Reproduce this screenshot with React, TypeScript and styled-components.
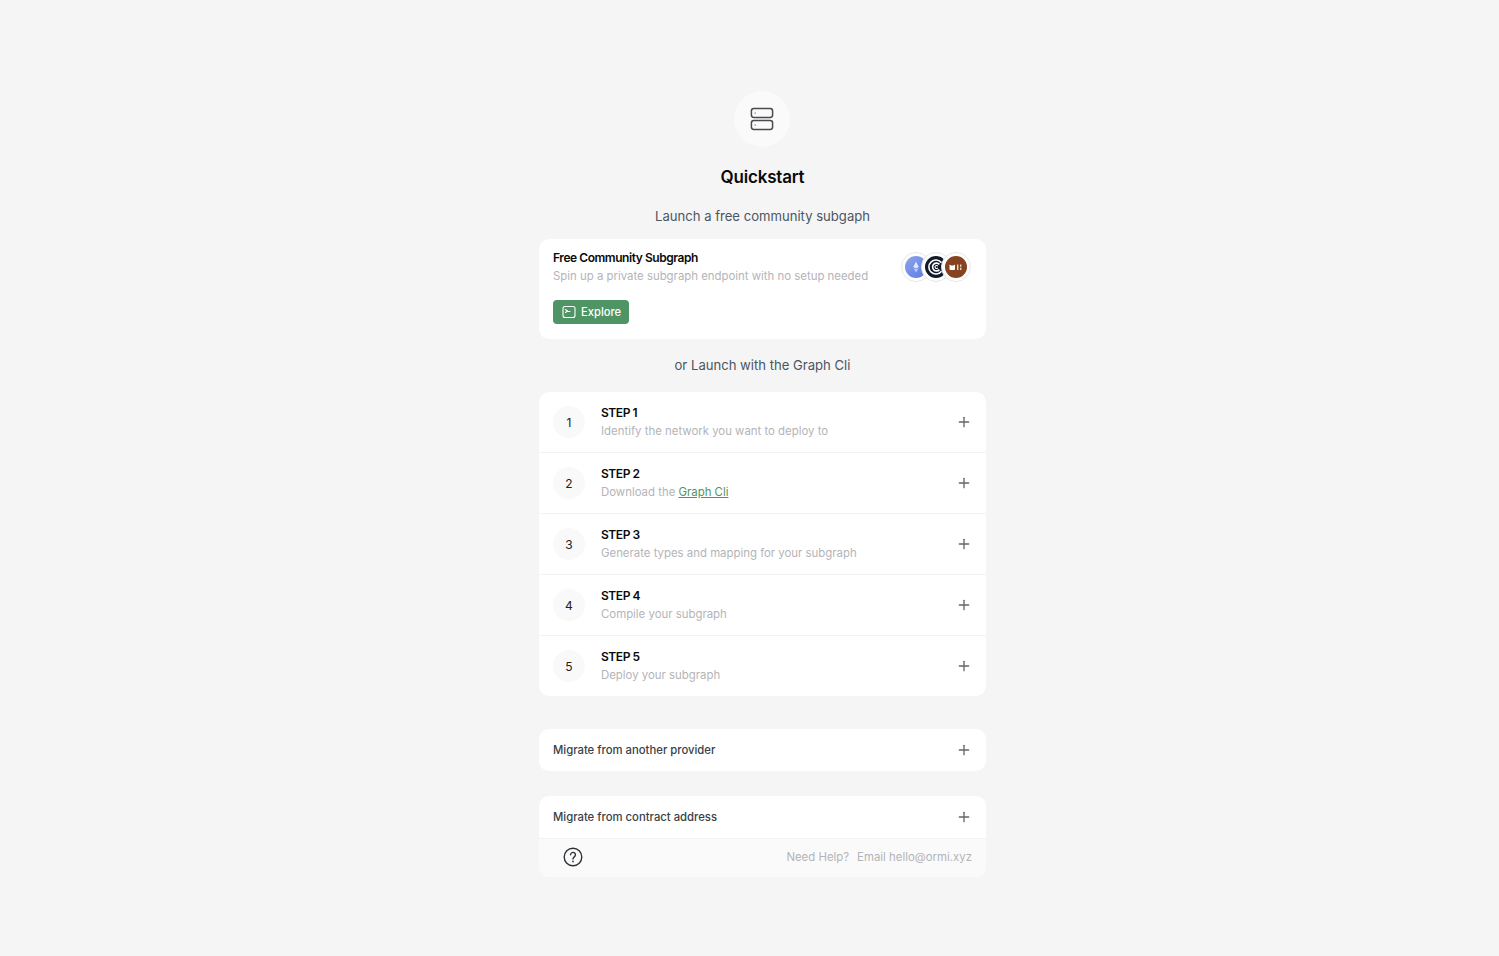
import React from "react";
import styled, { createGlobalStyle } from "styled-components";
import { Plus } from "lucide-react";

const GlobalStyle = createGlobalStyle`
  html, body {
    margin: 0;
    padding: 0;
    background: #f5f5f5;
    font-family: "Inter", "Liberation Sans", sans-serif;
  }
  * {
    box-sizing: border-box;
  }
`;

const steps = [
  { n: 1, text: "Identify the network you want to deploy to" },
  { n: 2, text: "Download the ", link: "Graph Cli" },
  { n: 3, text: "Generate types and mapping for your subgraph" },
  { n: 4, text: "Compile your subgraph" },
  { n: 5, text: "Deploy your subgraph" },
];

const ServerIcon = () => (
  <svg width="24" height="24" viewBox="0 0 24 24" fill="none" stroke="#4a4a4f" strokeWidth="1.5">
    <rect x="1.4" y="1.5" width="21.2" height="9" rx="2.4" />
    <rect x="1.4" y="13.5" width="21.2" height="9" rx="2.4" />
    <path d="M4.5 6h1.5M4.5 18h1.5" stroke="#77777c" strokeWidth="1.2" />
  </svg>
);

const TerminalIcon = () => (
  <svg width="14" height="14" viewBox="0 0 14 14" fill="none" stroke="#fff" strokeWidth="1.1">
    <rect x="1" y="1.5" width="12" height="11" rx="2" />
    <path d="M3.5 4.5 5.5 6 3.5 7.5M6 6.5h2" strokeLinecap="round" strokeLinejoin="round" />
  </svg>
);

const EthIcon = () => (
  <svg width="22" height="22" viewBox="0 0 22 22">
    <defs>
      <linearGradient id="ethFill" x1="0" y1="0" x2="1" y2="1">
        <stop offset="0" stopColor="#8fa4ec" />
        <stop offset="1" stopColor="#5b7be0" />
      </linearGradient>
    </defs>
    <circle cx="11" cy="11" r="11" fill="url(#ethFill)" />
    <path d="M11 5.5 8.2 11 11 12.6 13.8 11Z" fill="#dfe6fb" />
    <path d="M8.4 11.9 11 16.5 13.6 11.9 11 13.4Z" fill="#c3cff5" />
  </svg>
);

const CoinIcon = () => (
  <svg width="22" height="22" viewBox="0 0 22 22" fill="none">
    <circle cx="11" cy="11" r="11" fill="#101a2b" />
    <path d="M16.5 6.8A7 7 0 1 0 16.5 15.2" stroke="#fff" strokeWidth="1.6" />
    <path d="M14.4 8.4A3.9 3.9 0 1 0 14.4 13.6" stroke="#fff" strokeWidth="1.6" />
    <path d="M12.8 10.2A1.5 1.5 0 1 0 12.8 11.8" stroke="#fff" strokeWidth="1.1" />
  </svg>
);

const BrownIcon = () => (
  <svg width="22" height="22" viewBox="0 0 22 22">
    <circle cx="11" cy="11" r="11" fill="#86431f" />
    <path d="M4.5 8.5 6 9.4h2.5L10 8.5V13a1 1 0 0 1-1 1H5.5a1 1 0 0 1-1-1Z" fill="#fff" />
    <path d="M12 8.5h1.4v5.5H12ZM15 8.5h1.4v2.2H15ZM15 11.7h1.4V14H15Z" fill="#e9d5c7" />
  </svg>
);

const HelpIcon = () => (
  <svg width="20" height="20" viewBox="0 0 20 20" fill="none" stroke="#2f3239" strokeWidth="1.4">
    <circle cx="10" cy="10" r="8.8" />
    <path d="M7.6 7.8a2.4 2.4 0 1 1 3.7 2c-.8.5-1.3 1-1.3 1.9v.4" strokeLinecap="round" />
    <path d="M10 14.4v.3" strokeLinecap="round" strokeWidth="1.6" />
  </svg>
);

const Page = styled.main`
  min-height: 956px;
  padding: 91px 0 79px 539px;
`;

const Column = styled.div`
  width: 447px;
  display: flex;
  flex-direction: column;
  align-items: stretch;
`;

const IconCircle = styled.div`
  width: 56px;
  height: 56px;
  margin-right: 2px;
  border-radius: 50%;
  background: #fafafa;
  display: flex;
  align-items: center;
  justify-content: center;
  align-self: center;
`;

const Title = styled.h1`
  margin: 18px 0 0;
  font-size: 17px;
  line-height: 24px;
  font-weight: 600;
  letter-spacing: -0.2px;
  color: #0a0a0a;
  text-align: center;
`;

const Caption = styled.p<{ $top: number }>`
  margin: ${({ $top }) => $top}px 0 0;
  font-size: 13.1px;
  line-height: 20px;
  font-weight: 400;
  color: #4b5563;
  text-align: center;
`;

const Card = styled.section<{ $top: number }>`
  margin-top: ${({ $top }) => $top}px;
  background: #fff;
  border-radius: 10px;
  overflow: hidden;
`;

const CommunityBody = styled.div`
  height: 100px;
  padding: 10px 14px 0;
  position: relative;
`;

const CardTitle = styled.div`
  font-size: 12px;
  line-height: 17px;
  font-weight: 600;
  letter-spacing: -0.45px;
  color: #0a0a0a;
`;

const Muted = styled.div`
  font-size: 11.4px;
  line-height: 18px;
  color: #b4b4b8;
  margin-top: 1px;
`;

const ExploreButton = styled.button`
  margin-top: 15px;
  height: 24px;
  width: 76px;
  padding: 0 0 0 9px;
  border: 0;
  border-radius: 4px;
  background: #4f9464;
  color: #fff;
  font: 500 11.2px "Inter", sans-serif;
  display: flex;
  align-items: center;
  gap: 5px;
`;

const Logos = styled.div`
  position: absolute;
  top: 13px;
  right: 15px;
  display: flex;
`;

const Logo = styled.div`
  width: 30px;
  height: 30px;
  border-radius: 50%;
  background: #fff;
  border: 1px solid #e6e6e6;
  display: flex;
  align-items: center;
  justify-content: center;
  margin-left: -10px;
`;

const StepRow = styled.div`
  height: 61px;
  padding: 0 14px;
  display: flex;
  align-items: center;
  border-bottom: 1px solid #f3f3f3;

  &:last-child {
    height: 60px;
    border-bottom: 0;
  }
`;

const StepNumber = styled.div`
  width: 32px;
  height: 32px;
  flex: none;
  border-radius: 50%;
  background: #f9f9f9;
  font-size: 12px;
  color: #222;
  display: flex;
  align-items: center;
  justify-content: center;
`;

const StepText = styled.div`
  flex: 1;
  margin-left: 16px;
`;

const StepLink = styled.a`
  color: #4f9464;
  text-decoration: underline;
`;

const PlusIcon = styled(Plus)`
  width: 16px;
  height: 16px;
  flex: none;
  color: #666;
`;

const ToggleRow = styled.div`
  height: 42px;
  padding: 0 14px;
  display: flex;
  align-items: center;
  justify-content: space-between;
`;

const ToggleLabel = styled.span`
  font-size: 11.3px;
  font-weight: 500;
  color: #3a3f4a;
`;

const HelpBar = styled.div`
  height: 39px;
  padding: 0 14px 2px 24px;
  display: flex;
  align-items: center;
  justify-content: space-between;
  background: #fafafa;
  border-top: 1px solid #f3f3f3;
  font-size: 11.4px;
  color: #b4b4b8;
`;

const HelpLinks = styled.div`
  display: flex;
  gap: 8px;
`;

export default function App() {
  return (
    <Page>
      <GlobalStyle />
      <Column>
        <IconCircle>
          <ServerIcon />
        </IconCircle>
        <Title>Quickstart</Title>
        <Caption $top={17}>Launch a free community subgaph</Caption>
        <Card $top={13}>
          <CommunityBody>
            <CardTitle>Free Community Subgraph</CardTitle>
            <Muted>Spin up a private subgraph endpoint with no setup needed</Muted>
            <ExploreButton>
              <TerminalIcon />
              Explore
            </ExploreButton>
            <Logos>
              <Logo>
                <EthIcon />
              </Logo>
              <Logo>
                <CoinIcon />
              </Logo>
              <Logo>
                <BrownIcon />
              </Logo>
            </Logos>
          </CommunityBody>
        </Card>
        <Caption $top={16}>or Launch with the Graph Cli</Caption>
        <Card $top={17}>
          {steps.map((step) => (
            <StepRow key={step.n}>
              <StepNumber>{step.n}</StepNumber>
              <StepText>
                <CardTitle>STEP {step.n}</CardTitle>
                <Muted>
                  {step.text}
                  {step.link && <StepLink href="#">{step.link}</StepLink>}
                </Muted>
              </StepText>
              <PlusIcon />
            </StepRow>
          ))}
        </Card>
        <Card $top={33}>
          <ToggleRow>
            <ToggleLabel>Migrate from another provider</ToggleLabel>
            <PlusIcon />
          </ToggleRow>
        </Card>
        <Card $top={25}>
          <ToggleRow>
            <ToggleLabel>Migrate from contract address</ToggleLabel>
            <PlusIcon />
          </ToggleRow>
          <HelpBar>
            <HelpIcon />
            <HelpLinks>
              <span>Need Help?</span>
              <span>Email hello@ormi.xyz</span>
            </HelpLinks>
          </HelpBar>
        </Card>
      </Column>
    </Page>
  );
}
